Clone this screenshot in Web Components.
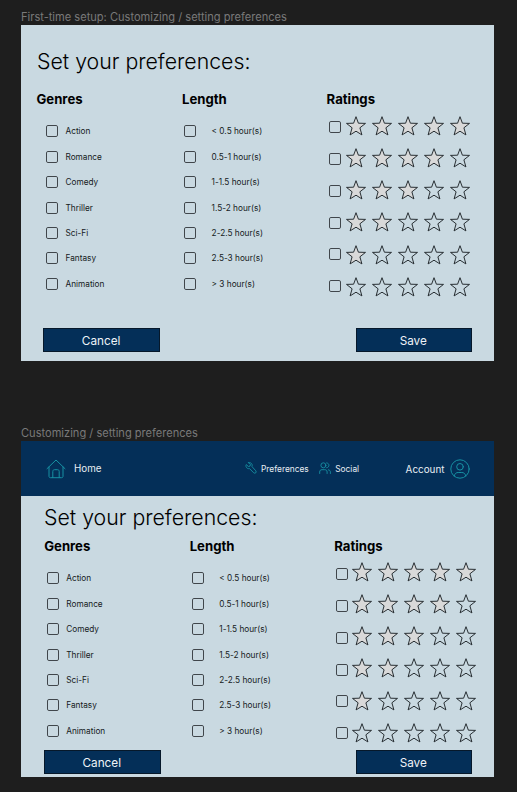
<!DOCTYPE html>
<html lang="en">
<head>
<meta charset="utf-8">
<title>Set your preferences</title>
<style>
html{background:#1e1e1e}
body{margin:0;width:517px;height:792px;overflow:hidden;background:#1e1e1e;font-family:Inter,"Liberation Sans",sans-serif;font-optical-sizing:none;color:#000}
</style>
</head>
<body>
<design-board></design-board>
<script>
const define = (name, render) => customElements.define(name, class extends HTMLElement {
  connectedCallback() {
    if (this.shadowRoot) return;
    this.attachShadow({ mode: 'open' }).innerHTML = render(this);
  }
});

define('check-box', () => `
<style>:host{display:block;flex:none;width:12px;height:12px}svg{display:block;overflow:visible}</style>
<svg width="12" height="12"><rect x=".5" y=".5" width="11" height="11" rx="1.4" fill="none" stroke="#30363a" stroke-width=".9"/></svg>`);

define('check-item', () => `
<style>
:host{display:flex;align-items:center;height:25.33px;gap:var(--label-gap,7.2px);font-size:8.25px;line-height:12px;color:#15191c;white-space:nowrap}
</style>
<check-box></check-box><span><slot></slot></span>`);

define('star-row', el => {
  const n = +el.getAttribute('filled');
  const star = on => `<svg width="26" height="20" viewBox="0 0 26 20"><path d="M10 .7 L12.4 7.2 L19.5 7.4 L13.9 11.8 L15.9 18.9 L10 15.2 L4.1 18.9 L6.1 11.8 L.5 7.4 L7.6 7.2 Z" fill="${on ? '#d9d9d9' : 'none'}" stroke="#20262a" stroke-width=".95"/></svg>`;
  return `
<style>
:host{display:flex;align-items:flex-start;height:32.25px}
check-box{margin:var(--box-drop,5px) var(--star-gap) 0 0}
svg{display:block;flex:none;overflow:visible;margin-top:var(--star-drop)}
</style>
<check-box></check-box>${[0,1,2,3,4].map(i => star(i < n)).join('')}`;
});

define('filter-group', el => `
<style>
:host{display:block}
h2{margin:-1px 0 1px;font-size:13.15px;line-height:16px;font-weight:700;white-space:nowrap}
.items{padding:var(--items-pad)}
</style>
<h2>${el.getAttribute('heading')}</h2><div class="items"><slot></slot></div>`);

define('action-button', () => `
<style>
:host{display:block}
button{display:block;box-sizing:border-box;width:116.5px;height:24px;padding:2px 0 0;margin:0;border:1px solid #06182a;background:#042f58;color:#eef3f7;font:400 11.75px/20px Inter,sans-serif;font-optical-sizing:none;border-radius:0}
span{display:block;position:relative;left:-.5px;top:.4px}
</style>
<button><span><slot></slot></span></button>`);

define('preferences-form', () => {
  const genres = ['Action','Romance','Comedy','Thriller','Sci-Fi','Fantasy','Animation'];
  const lengths = ['&lt; 0.5 hour(s)','0.5-1 hour(s)','1-1.5 hour(s)','1.5-2 hour(s)','2-2.5 hour(s)','2.5-3 hour(s)','&gt; 3 hour(s)'];
  const items = a => a.map(t => `<check-item>${t}</check-item>`).join('');
  const drops = ['5px','5px','5px','4.7px','3.6px','3px'];
  return `
<style>
:host{display:block}
h1{margin:0 0 0 var(--title-x);font-size:21.3px;line-height:28px;font-weight:340;white-space:nowrap}
.groups{display:grid;grid-template-columns:145.5px 144.6px 1fr;margin:var(--groups-y) 0 0 var(--groups-x);height:var(--groups-h)}
.genres{--items-pad:10.9px 0 0 var(--genre-x)}
.length{--items-pad:10.9px 0 0 2px;--label-gap:15.6px}
.ratings{--items-pad:8px 0 0 2.2px}
check-item:first-child{margin-bottom:.6px}
.actions{display:flex;justify-content:space-between;padding:0 22.4px 0 var(--actions-x)}
</style>
<h1>Set your preferences:</h1>
<div class="groups">
<filter-group class="genres" heading="Genres">${items(genres)}</filter-group>
<filter-group class="length" heading="Length">${items(lengths)}</filter-group>
<filter-group class="ratings" heading="Ratings">${[5,4,3,2,1,0].map((n, i) => `<star-row filled="${n}" style="--box-drop:${drops[i]}"></star-row>`).join('')}</filter-group>
</div>
<div class="actions"><action-button>Cancel</action-button><action-button>Save</action-button></div>`;
});

define('nav-link', () => `
<style>:host{display:flex;align-items:center;white-space:nowrap}</style>
<slot name="icon"></slot><slot></slot>`);

define('nav-bar', () => `
<style>
:host{display:flex;align-items:center;box-sizing:border-box;height:55px;padding:1px 24.4px 0 25px;background:#042f58;color:#e8eef3}
svg{display:block;fill:none;stroke:#1791a3;stroke-width:1;stroke-linejoin:round;stroke-linecap:round}
.home{font-size:9.8px;gap:8px;width:57px}
.pref,.social{font-size:8.35px;gap:4px;padding-top:1px}
.pref{margin-left:142px}
.pref svg,.social svg{margin-top:-2px}
.social{margin-left:10.5px}
.account{font-size:9.9px;gap:5.5px;margin-left:auto}
</style>
<nav-link class="home"><svg slot="icon" width="20" height="20" viewBox="0 0 20 20"><path d="M1 9.7 10 1l9 8.7M3 8v9.2c0 1 .5 1.5 1.5 1.5h11c1 0 1.5-.5 1.5-1.5V8M6.8 18.5v-6c0-1.2.6-1.8 1.8-1.8h2.8c1.2 0 1.8.6 1.8 1.8v6"/></svg>Home</nav-link>
<nav-link class="pref"><svg slot="icon" width="12" height="12" viewBox="0 0 12 12" style="stroke-width:.9"><path d="M3.6.7 5.4 2.6 5 4.1 3.4 4.5 1.2 2.6C.2 4.8 2 7.1 4.5 6.6l4.2 4.2c1.5 1.2 3.3-.5 2.1-2L7 4.6C7.8 2 5.9.1 3.6.7Z"/></svg>Preferences</nav-link>
<nav-link class="social"><svg slot="icon" width="12" height="12" viewBox="0 0 12 12" style="stroke-width:.9"><circle cx="4.4" cy="3.3" r="2.5"/><path d="M.7 11.5V10c0-1.5.8-2.3 2.3-2.3h2.8c1.5 0 2.3.8 2.3 2.3v1.5M7.7.9c3.1.2 3.1 4.6 0 4.8M9.4 7.8c1.3.2 2 1 2 2.3v1.4"/></svg>Social</nav-link>
<nav-link class="account">Account<svg width="20" height="20" viewBox="0 0 20 20"><circle cx="10" cy="10" r="9.2"/><circle cx="10" cy="7.8" r="3.3"/><path d="M4.2 17c.6-2.5 2-3.5 4-3.5h3.6c2 0 3.4 1 4 3.5"/></svg></nav-link>`);

define('design-frame', el => `
<style>
:host{display:block;width:473.4px}
.name{font-size:11.08px;line-height:16px;height:16px;color:#797979;white-space:nowrap}
.surface{height:336.3px;background:#c9d9e1;overflow:hidden}
</style>
<div class="name">${el.getAttribute('label')}</div>
<div class="surface"><slot></slot></div>`);

define('design-board', () => `
<style>
:host{display:flex;flex-direction:column;gap:63.7px;padding:9px 0 0 21px}
.first{padding-top:22px;--title-x:16px;--groups-x:15.5px;--groups-y:16.7px;--groups-h:236.3px;--genre-x:9.8px;--actions-x:22.4px;--star-gap:5.2px;--star-drop:0px}
.second{padding-top:7px;--title-x:23px;--groups-x:23.2px;--groups-y:7.7px;--groups-h:211.3px;--genre-x:2.9px;--actions-x:23px;--star-gap:3.3px;--star-drop:-1.1px}
</style>
<design-frame label="First-time setup: Customizing / setting preferences"><preferences-form class="first"></preferences-form></design-frame>
<design-frame label="Customizing / setting preferences"><nav-bar></nav-bar><preferences-form class="second"></preferences-form></design-frame>`);
</script>
</body>
</html>
